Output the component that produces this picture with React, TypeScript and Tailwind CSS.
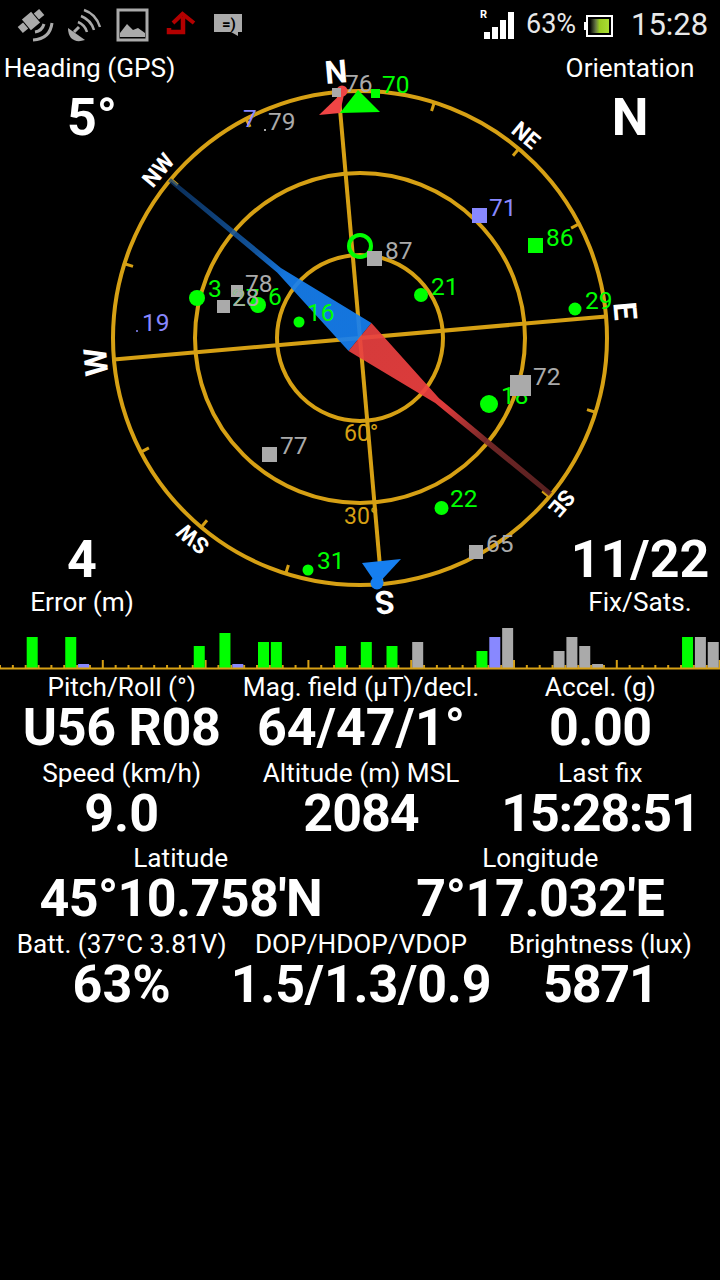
const GOLD = "#d6a014";
const GREEN = "#00ff00";
const GREY = "#aaaaaa";
const PURPLE = "#8888ff";

const CX = 360;
const CY = 338;

function polar(bearing: number, r: number): [number, number] {
  const a = ((bearing - 5) * Math.PI) / 180;
  return [CX + r * Math.sin(a), CY - r * Math.cos(a)];
}

const TICKS = [22.5, 45, 67.5, 112.5, 135, 157.5, 202.5, 225, 247.5, 292.5, 315, 337.5];

const needle = (() => {
  const u = [0.771, 0.636];
  const n = [-0.636, 0.771];
  const p = (d: number, w: number) => `${CX + u[0] * d + n[0] * w},${337 + u[1] * d + n[1] * w}`;
  return {
    blue: [p(-247, -2), p(-105, -3), p(0, -18), p(0, 18), p(-105, 3), p(-247, 2)].join(" "),
    red: [p(247, -2.5), p(100, -3), p(0, -18), p(0, 18), p(100, 3), p(247, 2.5)].join(" "),
  };
})();

type Sat = { x: number; y: number; t: string; tx: number; ty: number; c: string; k: "dot" | "sq" | "none"; s: number };

const SATS: Sat[] = [
  { k: "dot", x: 421, y: 295, s: 7, t: "21", tx: 431, ty: 295, c: GREEN },
  { k: "dot", x: 575, y: 309, s: 6.5, t: "29", tx: 585, ty: 309, c: GREEN },
  { k: "dot", x: 489, y: 404, s: 9, t: "18", tx: 501, ty: 404, c: GREEN },
  { k: "dot", x: 197, y: 298, s: 8, t: "3", tx: 208, ty: 297, c: GREEN },
  { k: "dot", x: 258, y: 305, s: 8, t: "6", tx: 268, ty: 305, c: GREEN },
  { k: "none", x: 0, y: 0, s: 0, t: "27", tx: 232, ty: 306, c: GREEN },
  { k: "dot", x: 299, y: 322, s: 5.5, t: "16", tx: 307, ty: 321, c: GREEN },
  { k: "dot", x: 441.5, y: 508, s: 7, t: "22", tx: 450, ty: 507, c: GREEN },
  { k: "dot", x: 308, y: 570, s: 5.5, t: "31", tx: 317, ty: 569, c: GREEN },
  { k: "dot", x: 137, y: 331, s: 1, t: "19", tx: 142, ty: 331, c: PURPLE },
  { k: "sq", x: 528, y: 238, s: 15, t: "86", tx: 546, ty: 246, c: GREEN },
  { k: "sq", x: 371, y: 89, s: 9, t: "70", tx: 382, ty: 93, c: GREEN },
  { k: "sq", x: 472, y: 208, s: 15, t: "71", tx: 489, ty: 216, c: PURPLE },
  { k: "sq", x: 367, y: 251, s: 15, t: "87", tx: 385, ty: 259, c: GREY },
  { k: "sq", x: 510, y: 375, s: 21, t: "72", tx: 533, ty: 385, c: GREY },
  { k: "sq", x: 231, y: 285, s: 12, t: "78", tx: 245, ty: 292, c: GREY },
  { k: "sq", x: 217, y: 300, s: 13, t: "28", tx: 232, ty: 306, c: GREY },
  { k: "sq", x: 262, y: 447, s: 15, t: "77", tx: 280, ty: 454, c: GREY },
  { k: "sq", x: 469, y: 545, s: 14, t: "65", tx: 486, ty: 552, c: GREY },
  { k: "sq", x: 332, y: 88, s: 9, t: "76", tx: 345, ty: 92, c: GREY },
];

const BARS: [number, number, string][] = [
  [2, 637, GREEN], [5, 637, GREEN], [6, 664, PURPLE], [15, 646, GREEN], [17, 633, GREEN], [18, 664, PURPLE],
  [20, 642, GREEN], [21, 642, GREEN], [26, 646, GREEN], [28, 642, GREEN], [30, 646, GREEN], [32, 642, GREY],
  [37, 651, GREEN], [38, 637, PURPLE], [39, 628, GREY], [43, 651, GREY], [44, 637, GREY], [45, 646, GREY],
  [46, 664, GREY], [53, 637, GREEN], [54, 637, GREY], [55, 642, GREY],
];

function StatusIcons() {
  return (
    <svg width="250" height="48" viewBox="0 0 250 48" className="block">
      {/* satellite */}
      <g transform="rotate(-40 31 21)" fill={GREY}>
        <rect x="17" y="17" width="7" height="8" />
        <rect x="25" y="14" width="12" height="14" />
        <rect x="38" y="17" width="7" height="8" />
      </g>
      <path d="M35 32 Q42 31 44 24" stroke={GREY} strokeWidth="3" fill="none" />
      <path d="M33 40 Q50 39 52 23" stroke={GREY} strokeWidth="3" fill="none" />
      {/* dish */}
      <path d="M68 28 L85 40 Q76 43 71 38 Q68 34 68 28 Z" fill={GREY} />
      <path d="M74 32 L79 27" stroke={GREY} strokeWidth="3" />
      <path d="M78 22 Q85 25 87 32 M81 16 Q91 20 94 30 M84 10 Q96 14 100 27" stroke={GREY} strokeWidth="2.5" fill="none" />
      {/* picture */}
      <rect x="118" y="10" width="29" height="30" stroke={GREY} strokeWidth="3" fill="none" />
      <path d="M120 37 L120 33 L127 24 L133 30 L138 28 L145 33 L145 37 Z" fill={GREY} />
      {/* upload */}
      <path d="M169 28 L169 32 L183 32 L183 17" stroke="#b30000" strokeWidth="4.5" fill="none" />
      <path d="M173 23 L182.5 14 L194 23" stroke="#b30000" strokeWidth="4" fill="none" />
      {/* chat */}
      <path d="M214 14 L242 14 L242 32 L238 32 L238 36 L231 32 L214 32 Z" fill={GREY} />
      <text x="222" y="29" fontSize="15" fontWeight="700" fill="#000">=)</text>
    </svg>
  );
}

function Signal() {
  return (
    <svg width="60" height="48" viewBox="0 0 60 48" className="block">
      <text x="2" y="18" fontSize="11" fontWeight="700" fill="#fff">R</text>
      <rect x="6" y="32" width="6" height="7" fill="#fff" />
      <rect x="14" y="27" width="6" height="12" fill="#fff" />
      <rect x="22" y="20" width="6" height="19" fill="#fff" />
      <rect x="30" y="12" width="6" height="27" fill="#fff" />
    </svg>
  );
}

function Battery() {
  return (
    <svg width="30" height="48" viewBox="0 0 30 48" className="block">
      <defs>
        <linearGradient id="bat" x1="0" x2="1" y1="0" y2="0">
          <stop offset="0" stopColor="#000" />
          <stop offset="0.3" stopColor="#667744" />
          <stop offset="0.5" stopColor="#99cc22" />
          <stop offset="1" stopColor="#aadd33" />
        </linearGradient>
      </defs>
      <rect x="0" y="22" width="2" height="8" fill="#fff" />
      <rect x="3" y="16" width="25" height="20" fill="#000" stroke="#fff" strokeWidth="2" />
      <rect x="6" y="19" width="19" height="14" fill="url(#bat)" />
    </svg>
  );
}

function Compass() {
  return (
    <svg width="720" height="578" viewBox="0 48 720 578" className="absolute inset-0 block overflow-visible">
      <defs>
        <linearGradient id="bn" gradientUnits="userSpaceOnUse" x1="172" y1="182" x2="360" y2="337">
          <stop offset="0" stopColor="#0f3f78" stopOpacity="0.8" />
          <stop offset="0.44" stopColor="#135aa8" />
          <stop offset="0.6" stopColor="#167ff0" />
          <stop offset="1" stopColor="#167ff0" />
        </linearGradient>
        <linearGradient id="rn" gradientUnits="userSpaceOnUse" x1="360" y1="337" x2="548" y2="492">
          <stop offset="0" stopColor="#e84040" />
          <stop offset="0.45" stopColor="#f04040" />
          <stop offset="0.68" stopColor="#7a2a2a" />
          <stop offset="1" stopColor="#5e2222" />
        </linearGradient>
      </defs>

      <g stroke={GOLD} fill="none" strokeWidth="4">
        <circle cx={CX} cy={CY} r="247" />
        <circle cx={CX} cy={CY} r="165" />
        <circle cx={CX} cy={CY} r="83" />
        <line x1={polar(0, 247)[0]} y1={polar(0, 247)[1]} x2={polar(180, 247)[0]} y2={polar(180, 247)[1]} />
        <line x1={polar(90, 247)[0]} y1={polar(90, 247)[1]} x2={polar(270, 247)[0]} y2={polar(270, 247)[1]} />
        {TICKS.map((b) => {
          const a = polar(b, 247);
          const c = polar(b, 238);
          return <line key={b} x1={a[0]} y1={a[1]} x2={c[0]} y2={c[1]} strokeWidth="3" />;
        })}
      </g>

      <polygon points={needle.blue} fill="url(#bn)" opacity="0.92" />
      <polygon points={needle.red} fill="url(#rn)" opacity="0.92" />

      <text x="344" y="441" fontSize="23" fill={GOLD}>60°</text>
      <text x="344" y="524" fontSize="23" fill={GOLD}>30°</text>

      {/* north marker */}
      <polygon points="319,115 340,113 345,90" fill="#f04545" />
      <circle cx="342" cy="91" r="5.5" fill="#f04545" />
      <polygon points="340,113 380,112 358,90" fill={GREEN} />

      {/* south marker */}
      <polygon points="362,563 401,559 377,585" fill="#167ff0" />
      <circle cx="377" cy="583" r="6.5" fill="#167ff0" />

      {/* sats */}
      <circle cx="360" cy="246" r="11" stroke={GREEN} strokeWidth="4" fill="none" />
      <text x="243" y="127" fontSize="24.5" fill={PURPLE}>7</text>
      <rect x="264" y="129" width="2" height="2" fill={GREY} />
      <text x="268" y="130" fontSize="24.5" fill={GREY}>79</text>
      {SATS.map((s) =>
        s.k === "dot" ? (
          <circle key={s.t} cx={s.x} cy={s.y} r={s.s} fill={s.c} />
        ) : s.k === "sq" ? (
          <rect key={s.t} x={s.x} y={s.y} width={s.s} height={s.s} fill={s.c} />
        ) : null,
      )}
      {SATS.map((s) => (
        <text key={s.t} x={s.tx} y={s.ty} fontSize="24.5" fill={s.c}>
          {s.t}
        </text>
      ))}
      <rect x="510" y="375" width="21" height="21" fill={GREY} />

      {/* cardinal labels */}
      <g fill="#fff" fontWeight="700" textAnchor="middle">
        <text transform="translate(336 72) rotate(-5)" y="11" fontSize="32">N</text>
        <text transform="translate(625 311) rotate(85)" y="11" fontSize="32">E</text>
        <text transform="translate(385 602) rotate(175)" y="11" fontSize="32">S</text>
        <text transform="translate(96 362) rotate(-95)" y="11" fontSize="32">W</text>
        <text transform="translate(526 135) rotate(40)" y="8" fontSize="22.5">NE</text>
        <text transform="translate(562 503) rotate(130)" y="8" fontSize="22.5">SE</text>
        <text transform="translate(193 539) rotate(-140)" y="8" fontSize="22.5">SW</text>
        <text transform="translate(158 170) rotate(-50)" y="8" fontSize="22.5">NW</text>
      </g>
    </svg>
  );
}

function BarChart() {
  const ticks = Array.from({ length: 57 }, (_, i) => i);
  return (
    <svg width="720" height="44" viewBox="0 626 720 44" className="block">
      {ticks.map((i) => {
        const x = i * 12.85;
        const big = i > 0 && i % 8 === 0;
        return <rect key={i} x={x - 1} y={big ? 660 : 665} width="2" height={big ? 9 : 4} fill={GOLD} />;
      })}
      {BARS.map(([i, top, c]) => (
        <rect key={i} x={i * 12.85 + 1} y={top} width="11" height={668 - top} fill={c} />
      ))}
      <rect x="0" y="667.5" width="720" height="2" fill={GOLD} />
    </svg>
  );
}

function Stat({ label, value, track = "" }: { label: string; value: string; track?: string }) {
  return (
    <div className="flex flex-col items-center">
      <div className="text-[26.2px] leading-[32px] text-white whitespace-nowrap">{label}</div>
      <div className={`text-[52px] font-bold leading-[50px] text-white whitespace-nowrap ${track}`}>{value}</div>
    </div>
  );
}

export default function App() {
  return (
    <div className="w-[720px] h-[1280px] bg-black text-white overflow-hidden font-['Roboto',sans-serif]">
      <div className="flex items-center h-[48px]">
        <StatusIcons />
        <div className="ml-[228px]">
          <Signal />
        </div>
        <div className="ml-[-12px] w-[58px] text-[27px] leading-none text-[#e8e8e8]">63%</div>
        <Battery />
        <div className="ml-[17px] text-[31px] leading-none text-[#e8e8e8]">15:28</div>
      </div>

      <div className="relative h-[578px]">
        <Compass />
        <div className="relative flex flex-col justify-between h-[578px] pb-[9px] pointer-events-none">
          <div className="flex justify-between">
            <div className="w-[184px] flex flex-col items-center">
              <div className="text-[26.2px] leading-[40px] whitespace-nowrap mr-[5px]">Heading (GPS)</div>
              <div className="text-[52px] font-bold leading-[60px]">5°</div>
            </div>
            <div className="w-[180px] flex flex-col items-center">
              <div className="text-[26.2px] leading-[40px]">Orientation</div>
              <div className="text-[52px] font-bold leading-[60px]">N</div>
            </div>
          </div>
          <div className="flex justify-between">
            <div className="w-[164px] flex flex-col items-center">
              <div className="text-[52px] font-bold leading-[54px]">4</div>
              <div className="text-[26.2px] leading-[30px]">Error (m)</div>
            </div>
            <div className="w-[160px] flex flex-col items-center">
              <div className="text-[52px] font-bold leading-[54px]">11/22</div>
              <div className="text-[26.2px] leading-[30px]">Fix/Sats.</div>
            </div>
          </div>
        </div>
      </div>

      <BarChart />

      <div className="flex flex-col pt-[1px]">
        <div className="grid grid-cols-3 h-[86px] pl-[2px]">
          <Stat label="Pitch/Roll (°)" value="U56 R08" track="tracking-[-0.3px]" />
          <Stat label="Mag. field (µT)/decl." value="64/47/1°" />
          <Stat label="Accel. (g)" value="0.00" track="tracking-[-0.5px]" />
        </div>
        <div className="grid grid-cols-3 h-[85px] pl-[2px]">
          <Stat label="Speed (km/h)" value="9.0" />
          <Stat label="Altitude (m) MSL" value="2084" track="tracking-[-1px]" />
          <Stat label="Last fix" value="15:28:51" track="tracking-[-1.3px]" />
        </div>
        <div className="grid grid-cols-2 h-[86px] pl-[1px]">
          <Stat label="Latitude" value="45°10.758'N" track="tracking-[-0.6px]" />
          <Stat label="Longitude" value="7°17.032'E" track="tracking-[-0.4px]" />
        </div>
        <div className="grid grid-cols-3 h-[86px] pl-[2px]">
          <Stat label="Batt. (37°C 3.81V)" value="63%" />
          <Stat label="DOP/HDOP/VDOP" value="1.5/1.3/0.9" track="tracking-[-0.2px]" />
          <Stat label="Brightness (lux)" value="5871" track="tracking-[-1.2px]" />
        </div>
      </div>
    </div>
  );
}
